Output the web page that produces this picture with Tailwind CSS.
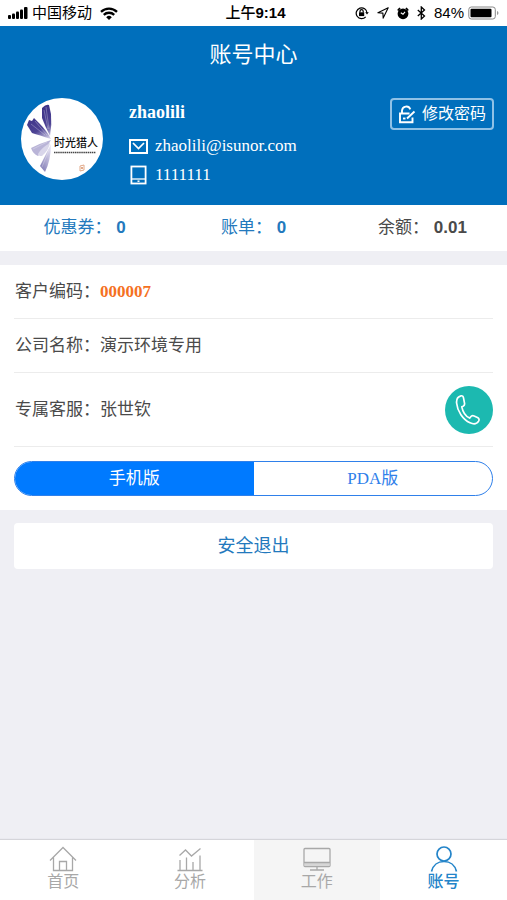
<!DOCTYPE html>
<html lang="zh-CN">
<head>
<meta charset="utf-8">
<meta name="viewport" content="width=device-width, initial-scale=1">
<title>账号中心</title>
<script src="https://cdn.jsdelivr.net/npm/@tailwindcss/browser@4"></script>
</head>
<body class="flex min-h-screen flex-col bg-[#efeff4] font-['Liberation_Serif','Noto_Sans_CJK_SC',serif] text-[17px] leading-6 text-[#4a4a4a]">

<!-- Status bar -->
<div class="grid h-[26px] grid-cols-[1fr_auto_1fr] items-center bg-white px-2 font-['Liberation_Sans','Noto_Sans_CJK_SC',sans-serif] text-[15px] leading-5 text-black">
  <div class="flex items-center gap-1">
    <svg class="h-3 w-5" viewBox="0 0 20 12" aria-hidden="true"><rect y="8" width="3" height="4" rx="1"/><rect x="4" y="6.500" width="3" height="5.500" rx="1"/><rect x="8" y="4.500" width="3" height="7.500" rx="1"/><rect x="12" y="2.500" width="3" height="9.500" rx="1"/><rect x="16" y="0" width="3.500" height="12" rx="1"/></svg>
    <span>中国移动</span>
    <svg class="ml-1 h-[13px] w-[18px]" viewBox="0 0 18 13" fill="none" stroke="#000" stroke-width="2.300" aria-hidden="true"><path d="M1 4.800a11.500 11.500 0 0 1 16 0M3.800 7.900a7.400 7.400 0 0 1 10.400 0"/><path d="M6.200 10.200a4 4 0 0 1 5.600 0L9 13z" fill="#000" stroke="none"/></svg>
  </div>
  <div class="pl-1 font-medium"><span>上午</span><span class="font-bold">9:14</span></div>
  <div class="flex items-center justify-end gap-2">
    <svg class="h-[14px] w-[14px]" viewBox="0 0 14 14" fill="none" stroke="#000" stroke-width="1.200" aria-hidden="true"><path d="M10.700 10.800A5.400 5.400 0 1 1 12 7"/><path d="M10.200 6.200h3.600L12 8.500z" fill="#000" stroke="none"/><rect x="4" y="6.300" width="5.200" height="3.800" fill="#000" stroke="none"/><path d="M5 6.500V5.300a1.600 1.600 0 0 1 3.200 0v1.200"/></svg>
    <svg class="h-[12px] w-[12px]" viewBox="0 0 12 12" fill="none" stroke="#000" stroke-width="1.100" stroke-linejoin="round" aria-hidden="true"><path d="M11.200.8.900 5.800l5 .3.300 5z"/></svg>
    <svg class="h-[13px] w-[12px]" viewBox="0 0 12 13" aria-hidden="true"><circle cx="6" cy="6.800" r="5.400"/><path d="M.8 3.500 3 1M11.200 3.500 9 1" stroke="#000" stroke-width="1.800"/><path d="M3.800 5.800 6 7.300 8 4.800" fill="none" stroke="#fff" stroke-width="1.100"/></svg>
    <svg class="h-[14px] w-[9px]" viewBox="0 0 9 14" fill="none" stroke="#000" stroke-width="1.300" aria-hidden="true"><path d="m.8 4 6.700 6-3.200 3V1l3.200 3L.8 10"/></svg>
    <div class="flex items-center gap-1"><span>84%</span>
    <svg class="h-[14px] w-[31px]" viewBox="0 0 31 14" aria-hidden="true"><rect x=".8" y="1" width="26.500" height="12" rx="2.500" fill="#fff" stroke="#888" stroke-width="1"/><rect x="2.500" y="2.700" width="21" height="8.600" rx="1" /><path d="M29 5v4q1.500-.5 1.500-2T29 5" fill="#999"/></svg></div>
  </div>
</div>

<!-- Profile header -->
<header class="bg-[#006fbc] pb-[18px] text-white">
  <h1 class="flex h-[58px] items-center justify-center text-[22px]">账号中心</h1>
  <div class="flex items-start pt-[14px] pr-[13px] pl-[21px]">
    <svg class="h-[82px] w-[82px] shrink-0" viewBox="0 0 82 82" role="img" aria-label="时光猎人">
      <circle cx="41" cy="41" r="41" fill="#fff"/>
      <defs>
        <linearGradient id="wing" gradientUnits="userSpaceOnUse" x1="14" y1="14" x2="30" y2="42"><stop offset="0" stop-color="#3d3388"/><stop offset=".55" stop-color="#4d4394"/><stop offset="1" stop-color="#eeebf7"/></linearGradient>
        <linearGradient id="tail" x1=".8" y1="0" x2=".2" y2="1"><stop offset="0" stop-color="#e9e6f4"/><stop offset="1" stop-color="#827cb5"/></linearGradient>
      </defs>
      <path d="M21 10q4-4 7-3l2 9q1 11-1 22-5-10-8-18z" fill="url(#wing)"/>
      <path d="M6 27 8 22l3 1 2-3 5 5q8 8 12 16Q18 37 11 35z" fill="url(#wing)"/>
      <path d="M30 42Q20 45 10 50q2 6 7 8 8-7 13-16" fill="#b9b4d7"/>
      <path d="M29 45q-9 5-12 11 0 2 4 2 7-6 8-13" fill="#d9d6ea"/>
      <path d="M30 46q-6 12-11 22l5 6q6-12 6-28" fill="url(#tail)"/>
      <path d="m23 12 4 19m-2-22 3 22M10 26l14 11M14 23l12 14M12 51l14-7M21 69l7-17" fill="none" stroke="#fff" stroke-opacity=".35" stroke-width=".8"/>
      <text x="33" y="49" font-family="'Noto Sans CJK SC', sans-serif" font-size="11" font-weight="500" fill="#111">时光猎人</text>
      <path d="M33 54.500h42" stroke="#444" stroke-width="1.500" stroke-dasharray="1.500 .6"/>
      <path d="m59 68 4-1v5l-4 1zm1 1 2 2m-2 0 2-2" fill="none" stroke="#e2aa8a" stroke-width="1"/>
    </svg>
    <div class="ml-[26px] min-w-0 flex-1">
      <h2 class="pt-[2px] text-[18px] font-bold leading-6">zhaolili</h2>
      <div class="mt-[10px] flex h-6 items-center gap-[7px]">
        <svg class="h-[15px] w-[19px]" viewBox="0 0 19 15" fill="none" stroke="#fff" stroke-width="2" aria-hidden="true"><rect x="1" y="1" width="17" height="13"/><path d="m4 4 5.500 5.500L15 4" stroke-width="1.700"/></svg>
        <span>zhaolili@isunor.com</span>
      </div>
      <div class="mt-[5px] flex h-6 items-center gap-[7px]">
        <svg class="h-[20px] w-[19px]" viewBox="0 0 19 20" fill="none" stroke="#fff" stroke-width="1.800" aria-hidden="true"><rect x="2.400" y="1.500" width="14.200" height="17"/><path d="M3 14h13" stroke-width="1.300"/><path d="M8.500 16.200h2" stroke-width="1.500"/></svg>
        <span>1111111</span>
      </div>
    </div>
    <button type="button" class="flex h-8 shrink-0 items-center gap-[6px] rounded border-2 border-[#8fc1e6] px-[6px] text-[16px]">
      <svg class="h-[19px] w-[18px]" viewBox="0 0 18 19" fill="none" stroke="#fff" stroke-width="1.900" aria-hidden="true"><path d="M11.500 8.500H2v8.700h12.500V12.500M4 8V5.500a4.300 4.300 0 0 1 8.300-1.200"/><path d="m16.500 6.500-7.500 7"/><path d="M5 13.500h2.500"/></svg>
      修改密码
    </button>
  </div>
</header>

<!-- Totals -->
<nav class="grid h-[46px] grid-cols-3 items-center bg-white text-center font-['Liberation_Sans','Noto_Sans_CJK_SC',sans-serif]" aria-label="账户概览">
  <a href="#coupons" class="text-[#2379bd]">优惠券： <b>0</b></a>
  <a href="#bills" class="text-[#2379bd]">账单： <b>0</b></a>
  <div>余额： <b>0.01</b></div>
</nav>

<!-- Customer details -->
<main class="flex-1">
  <section class="mt-[14px] bg-white px-[14px] pb-[14px]">
    <div class="flex h-[54px] items-center border-b border-[#ececec] pl-px"><span>客户编码：</span><b class="text-[#f5711f]">000007</b></div>
    <div class="flex h-[54px] items-center border-b border-[#ececec] pl-px"><span>公司名称：</span><span>演示环境专用</span></div>
    <div class="flex h-[74px] items-center border-b border-[#ececec] pl-px">
      <span>专属客服：</span><span>张世钦</span>
      <a href="#call" aria-label="拨打电话" class="ml-auto flex h-12 w-12 items-center justify-center rounded-full bg-[#1cb9b0]">
        <svg class="h-8 w-8" viewBox="0 0 32 32" fill="none" stroke="#fff" stroke-width="1.700" stroke-linejoin="round" aria-hidden="true"><path d="M8 1.800C5 2.500 3.300 5 3.600 9c.6 8 6.400 16.500 13.400 19.800 3.500 1.600 7 .9 8.600-1.700.9-1.600.4-2.900-1.200-3.600l-3.300-1.500c-1.500-.6-2.700-.2-3.600 1l-.9 1.100C13 22.300 9.700 17.500 8.800 12.800l1.300-.6c1.300-.7 1.700-1.700 1.400-3.100l-1-5.300C10.200 2.200 9.400 1.500 8 1.800z"/></svg>
      </a>
    </div>
    <div class="mt-[14px] grid h-[35px] grid-cols-2 overflow-hidden rounded-full border border-[#2f80ea]" role="group" aria-label="版本">
      <button type="button" aria-pressed="true" class="bg-[#007aff] text-white">手机版</button>
      <button type="button" aria-pressed="false" class="text-[#2f80ea]">PDA版</button>
    </div>
  </section>
  <div class="px-[14px] pt-[13px]">
    <button type="button" class="h-[46px] w-full rounded-sm bg-white text-[18px] text-[#2379bd]">安全退出</button>
  </div>
</main>

<!-- Tab bar -->
<nav class="grid h-[60px] grid-cols-4 bg-white text-[16px] leading-5 text-[#a8a8a8] shadow-[0_-1px_1px_#d5d5da]" aria-label="主导航">
  <a href="#home" class="flex flex-col items-center pt-[6px]">
    <svg class="h-[26px] w-7" viewBox="0 0 28 26" fill="none" stroke="currentColor" stroke-width="1.300" aria-hidden="true"><path d="M1 14.500 14 1.500l13 13M4.500 11.500v13h19v-13M10.500 24.500v-9h7v9"/></svg>
    <span>首页</span>
  </a>
  <a href="#analysis" class="flex flex-col items-center pt-[6px]">
    <svg class="h-[26px] w-7" viewBox="0 0 28 26" fill="none" stroke="currentColor" stroke-width="1.300" aria-hidden="true"><path d="m3.500 9.500 6-5.500 6 6L24.500 2.500M1.500 24.500h25M4 24V14M10.500 24V11.500M17 24v-8M24 24V9.500"/></svg>
    <span>分析</span>
  </a>
  <a href="#work" class="flex flex-col items-center bg-[#f5f5f5] pt-[6px]">
    <svg class="h-[26px] w-7" viewBox="0 0 28 26" fill="none" stroke="currentColor" stroke-width="1.300" aria-hidden="true"><rect x="1" y="2.500" width="26" height="18" rx="1"/><path d="M1.500 16.500h25v3.500h-25z" fill="#d6d6d6" stroke="none"/><path d="M1 16.500h26M14 20.500v3M7 24h14"/></svg>
    <span>工作</span>
  </a>
  <a href="#account" aria-current="page" class="flex flex-col items-center pt-[6px] text-[#2384c9]">
    <svg class="h-[26px] w-7" viewBox="0 0 28 26" fill="none" stroke="currentColor" stroke-width="1.700" aria-hidden="true"><circle cx="14" cy="8" r="7"/><path d="M1.500 25.500C3 19 8 15.500 14 15.500s11 3.500 12.500 10"/></svg>
    <span class="font-medium">账号</span>
  </a>
</nav>
</body>
</html>
